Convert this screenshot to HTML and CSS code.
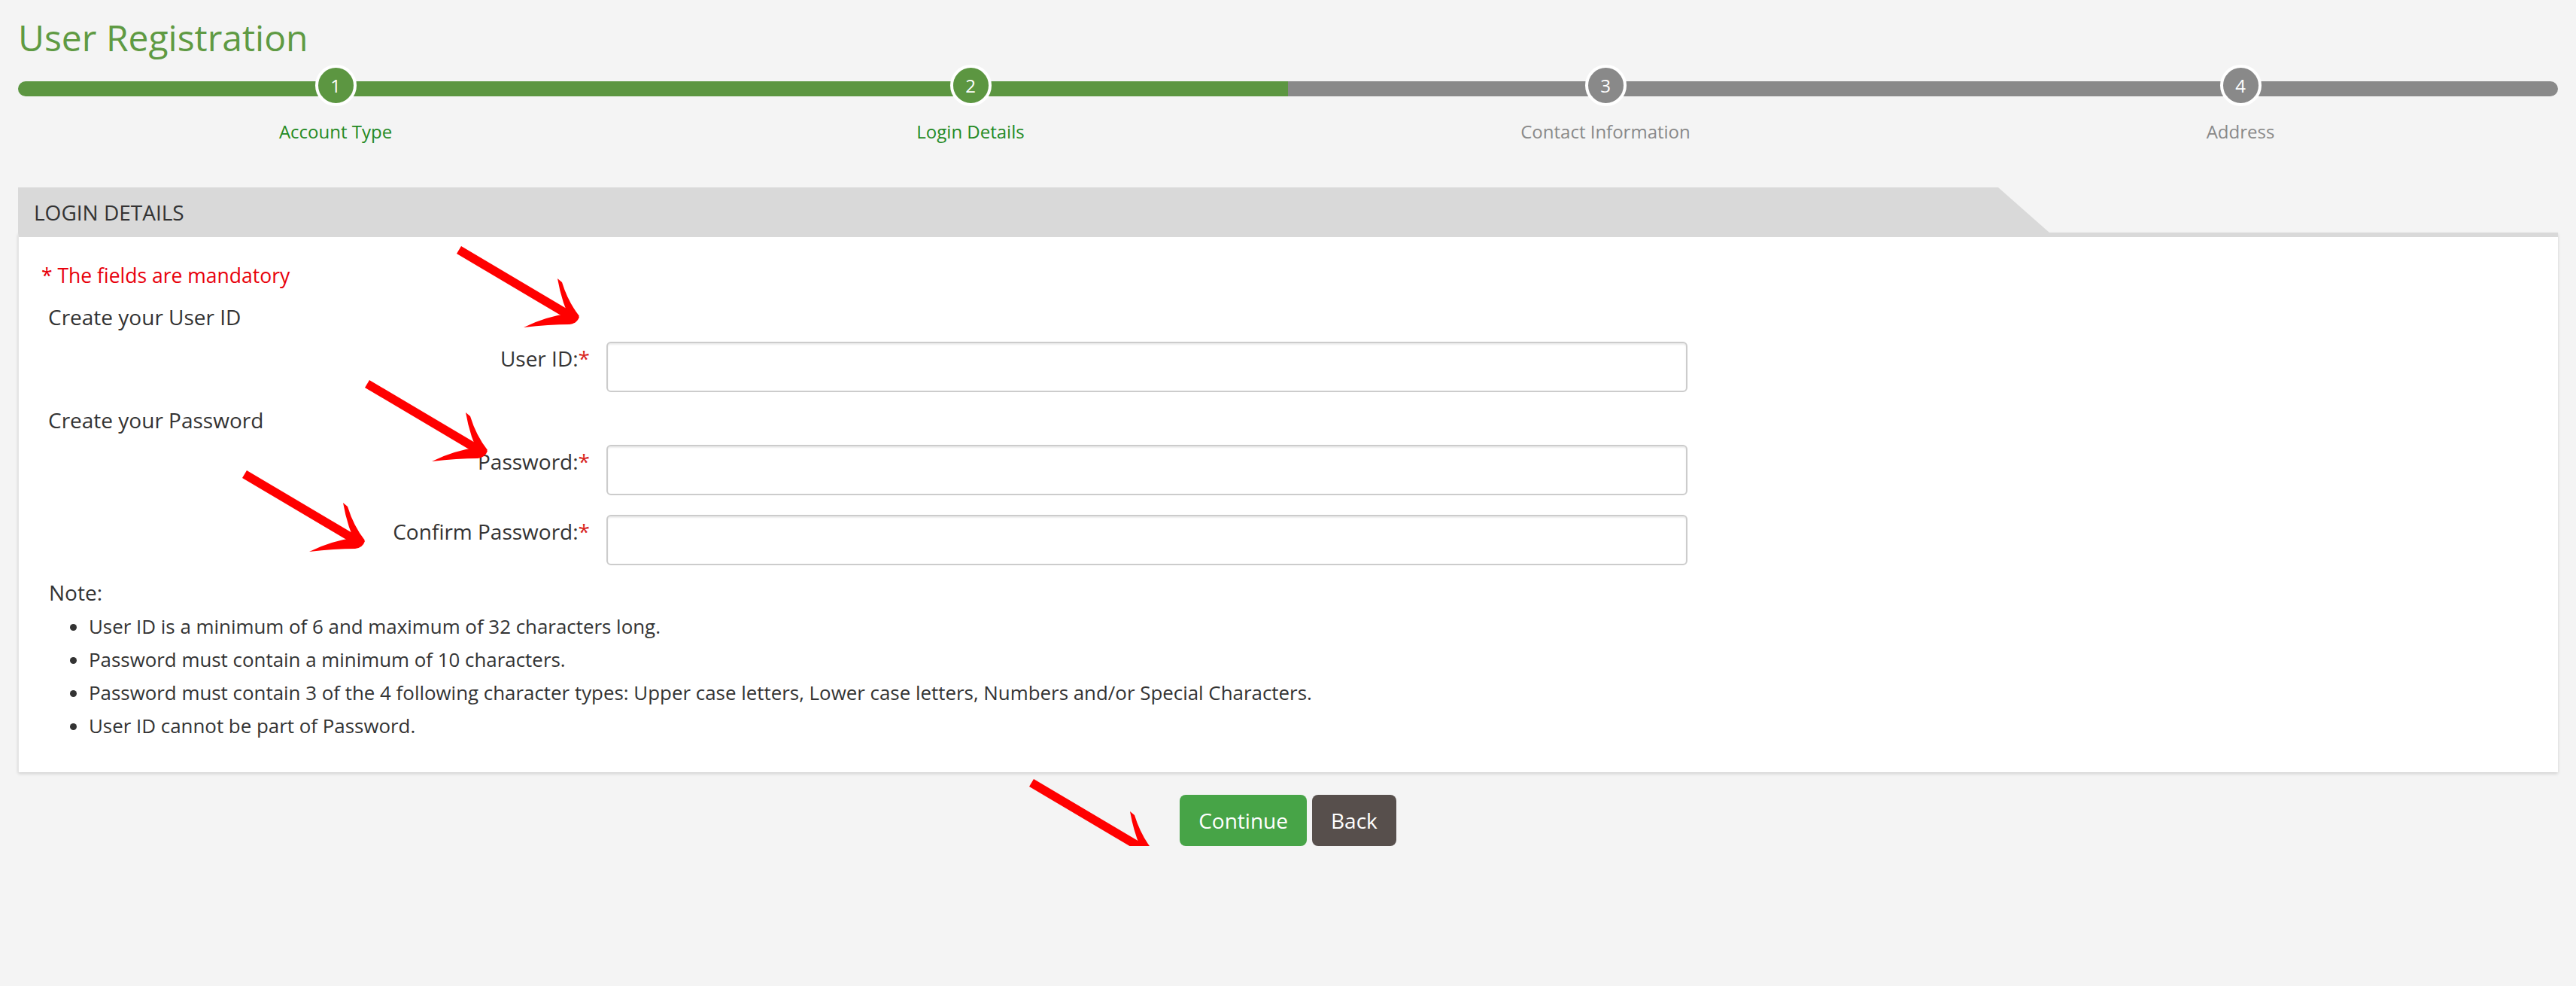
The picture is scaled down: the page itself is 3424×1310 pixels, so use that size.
FILE: index.html
```html
<!DOCTYPE html>
<html lang="en">
<head>
    <meta charset="UTF-8">
    <meta name="viewport" content="width=device-width, initial-scale=1.0">
    <title>User Registration</title>
    <link rel="stylesheet" href="styles.css">
</head>
<body>
    <div class="page">
        <h1 class="page-title">User Registration</h1>

        <div class="steps">
            <div class="step done">
                <div class="rail"></div>
                <div class="dot">1</div>
                <div class="step-label">Account Type</div>
            </div>
            <div class="step done">
                <div class="rail"></div>
                <div class="dot">2</div>
                <div class="step-label">Login Details</div>
            </div>
            <div class="step">
                <div class="rail"></div>
                <div class="dot">3</div>
                <div class="step-label">Contact Information</div>
            </div>
            <div class="step">
                <div class="rail"></div>
                <div class="dot">4</div>
                <div class="step-label">Address</div>
            </div>
        </div>

        <div class="panel">
            <div class="panel-tab">LOGIN DETAILS</div>
            <div class="panel-body">
                <div class="mandatory">* The fields are mandatory</div>

                <div class="section-title">Create your User ID</div>
                <div class="form-row first">
                    <label for="user-id">User ID:<span class="req">*</span></label>
                    <input type="text" id="user-id">
                </div>

                <div class="section-title pw">Create your Password</div>
                <div class="form-row first">
                    <label for="password">Password:<span class="req">*</span></label>
                    <input type="password" id="password">
                </div>
                <div class="form-row">
                    <label for="confirm-password">Confirm Password:<span class="req">*</span></label>
                    <input type="password" id="confirm-password">
                </div>

                <div class="note">Note:</div>
                <ul class="rules">
                    <li>User ID is a minimum of 6 and maximum of 32 characters long.</li>
                    <li>Password must contain a minimum of 10 characters.</li>
                    <li>Password must contain 3 of the 4 following character types: Upper case letters, Lower case letters, Numbers and/or Special Characters.</li>
                    <li>User ID cannot be part of Password.</li>
                </ul>
            </div>
        </div>

        <div class="actions">
            <button class="btn btn-continue">Continue</button>
            <button class="btn btn-back">Back</button>
        </div>
    </div>

    <!-- red hand-drawn arrows on top of the screenshot -->
    <svg class="arrow arrow-1" width="175" height="120" viewBox="0 0 175 120"><use href="#arrow"/></svg>
    <svg class="arrow arrow-2" width="175" height="120" viewBox="0 0 175 120"><use href="#arrow"/></svg>
    <svg class="arrow arrow-3" width="175" height="120" viewBox="0 0 175 120"><use href="#arrow"/></svg>
    <svg class="arrow arrow-4" width="175" height="120" viewBox="0 0 175 120"><use href="#arrow"/></svg>

    <svg width="0" height="0" class="defs">
        <defs>
            <g id="arrow" fill="#ff0000">
                <path d="M5,13 L11,3 L163,93 L157,103 Z"/>
                <path d="M139,46 L145,51 Q153,77 168,96 L158,104 Q145,80 139,46 Z"/>
                <path d="M94,111 Q124,96 158,92 L168,97 Q165,106 155,107 Q128,107 94,111 Z"/>
            </g>
        </defs>
    </svg>
</body>
</html>
```

FILE: styles.css
```css
body {
    margin: 0;
    background-color: #f4f4f4;
    font-family: "Open Sans", Arial, sans-serif;
    color: #333;
    position: relative;
}
.page {
    padding: 21px 24px 0;
}
.page-title {
    margin: 0;
    font-size: 48px;
    font-weight: normal;
    line-height: 58px;
    color: #5f9a43;
}

/* progress steps */
.steps {
    display: grid;
    grid-template-columns: repeat(4, 1fr);
    margin-top: 29px;
}
.step {
    display: flex;
    flex-direction: column;
    align-items: center;
}
.rail {
    align-self: stretch;
    height: 20px;
    background-color: #898989;
}
.step.done .rail {
    background-color: #5c9641;
}
.step:first-child .rail {
    border-radius: 10px 0 0 10px;
}
.step:last-child .rail {
    border-radius: 0 10px 10px 0;
}
.dot {
    width: 47px;
    height: 47px;
    margin-top: -42px;
    border: 4px solid #fff;
    border-radius: 50%;
    background-color: #898989;
    color: #fff;
    font-size: 24px;
    line-height: 47px;
    text-align: center;
}
.step.done .dot {
    background-color: #5c9641;
}
.step-label {
    margin-top: 17px;
    font-size: 24px;
    line-height: 34px;
    color: #898989;
}
.step.done .step-label {
    color: #248a24;
}

/* panel */
.panel {
    margin-top: 57px;
}
.panel-tab {
    width: 2700px;
    height: 60px;
    box-sizing: border-box;
    padding: 6px 21px 0;
    background-color: #d9d9d9;
    clip-path: polygon(0 0, 2632px 0, 100% 100%, 0 100%);
    font-size: 28px;
    line-height: 54px;
    color: #333;
}
.panel-body {
    background-color: #fff;
    border-top: 6px solid #d9d9d9;
    border-left: 1px solid #e6e6e6;
    padding: 31px 30px 40px 30px;
    box-shadow: 0 2px 4px rgba(0, 0, 0, 0.15);
    font-size: 28px;
    line-height: 40px;
}
.mandatory {
    color: #e8000b;
    font-size: 26.5px;
}
.section-title {
    margin-top: 15px;
    padding-left: 9px;
}
.section-title.pw {
    margin-top: 17px;
}
.form-row {
    display: grid;
    grid-template-columns: 729px 1437px;
    column-gap: 22px;
    margin-top: 26px;
}
.form-row.first {
    margin-top: 13px;
}
.form-row label {
    text-align: right;
    padding-top: 2px;
}
.req {
    color: #d9251d;
}
.form-row input {
    height: 67px;
    box-sizing: border-box;
    border: 2px solid #cccccc;
    border-radius: 6px;
    box-shadow: inset 0 2px 2px rgba(0, 0, 0, 0.075);
    background: #fff;
    font-size: 28px;
    padding: 0 16px;
}
.note {
    margin-top: 16px;
    padding-left: 10px;
}
.rules {
    margin: 3px 0 0;
    padding-left: 63px;
    font-size: 25.9px;
    line-height: 44px;
}

/* buttons */
.actions {
    display: flex;
    justify-content: center;
    gap: 7px;
    margin-top: 30px;
}
.btn {
    height: 68px;
    padding: 0 25px;
    border: none;
    border-radius: 8px;
    color: #fff;
    font-family: "Open Sans", Arial, sans-serif;
    font-size: 28px;
    cursor: pointer;
}
.btn-continue {
    background-color: #47a447;
}
.btn-back {
    background-color: #574f4c;
}

/* annotations */
.arrow {
    position: absolute;
}
.arrow-1 { left: 602px; top: 324px; }
.arrow-2 { left: 480px; top: 502px; }
.arrow-3 { left: 317px; top: 622px; }
.arrow-4 { left: 1363px; top: 1032px; }
.defs {
    position: absolute;
}
```
